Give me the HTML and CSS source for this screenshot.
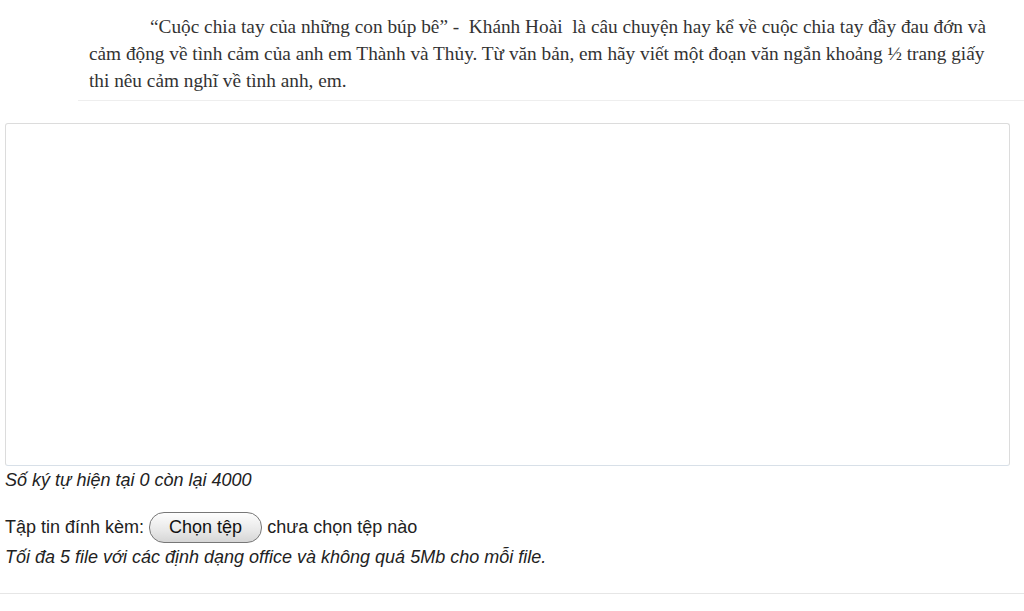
FILE: index.html
```html
<!DOCTYPE html>
<html lang="vi">
<head>
    <meta charset="UTF-8">
    <meta name="viewport" content="width=device-width, initial-scale=1.0">
    <title>Câu hỏi</title>
    <link rel="stylesheet" href="styles.css">
</head>
<body>
    <div class="question">
        <p class="question-text">“Cuộc chia tay của những con búp bê” -&nbsp; Khánh Hoài&nbsp; là câu chuyện hay kể về cuộc chia tay đầy đau đớn và cảm động về tình cảm của anh em Thành và Thủy. Từ văn bản, em hãy viết một đoạn văn ngắn khoảng ½ trang giấy thi nêu cảm nghĩ về tình anh, em.</p>
    </div>
    <div class="answer">
        <textarea class="answer-box"></textarea>
        <div class="counter">Số ký tự hiện tại 0 còn lại 4000</div>
        <div class="attach">
            <span>Tập tin đính kèm:</span>
            <label class="file-button">Chọn tệp<input type="file" class="file-input"></label>
            <span>chưa chọn tệp nào</span>
        </div>
        <div class="note">Tối đa 5 file với các định dạng office và không quá 5Mb cho mỗi file.</div>
    </div>
</body>
</html>
```
FILE: styles.css
```css
body {
    margin: 0;
    background: #fff;
    color: #222;
    font-family: "Liberation Sans", Arial, sans-serif;
}
.question {
    margin-left: 78px;
    padding: 13px 0 0 11px;
    border-bottom: 1px solid #eeeeee;
}
.question-text {
    margin: 0 0 6px 0;
    font-family: "Liberation Serif", "Times New Roman", serif;
    font-size: 19.3px;
    line-height: 27px;
    color: #333;
    text-indent: 61px;
    padding-right: 28px;
}
.answer {
    padding: 22px 14px 24px 5px;
    border-bottom: 1px solid #e6e6e6;
}
.answer-box {
    display: block;
    box-sizing: border-box;
    width: 1005px;
    height: 343px;
    margin: 0;
    border: 1px solid #dcdcdc;
    border-bottom-color: #d8e0e8;
    border-radius: 3px;
    resize: none;
}
.counter {
    font-size: 18px;
    font-style: italic;
    margin-top: 3px;
    line-height: 23px;
}
.attach {
    display: flex;
    align-items: center;
    gap: 5px;
    margin-top: 20px;
    font-size: 18px;
}
.file-button {
    display: inline-block;
    box-sizing: border-box;
    height: 31px;
    line-height: 29px;
    padding: 0 19px;
    border: 1px solid #777;
    border-radius: 15px;
    background: linear-gradient(#fdfdfd, #e8e8e8 60%, #d6d6d6);
    font-size: 18px;
    color: #111;
}
.file-input {
    display: none;
}
.note {
    font-size: 18px;
    font-style: italic;
    margin-top: 2px;
    line-height: 24px;
}
```
